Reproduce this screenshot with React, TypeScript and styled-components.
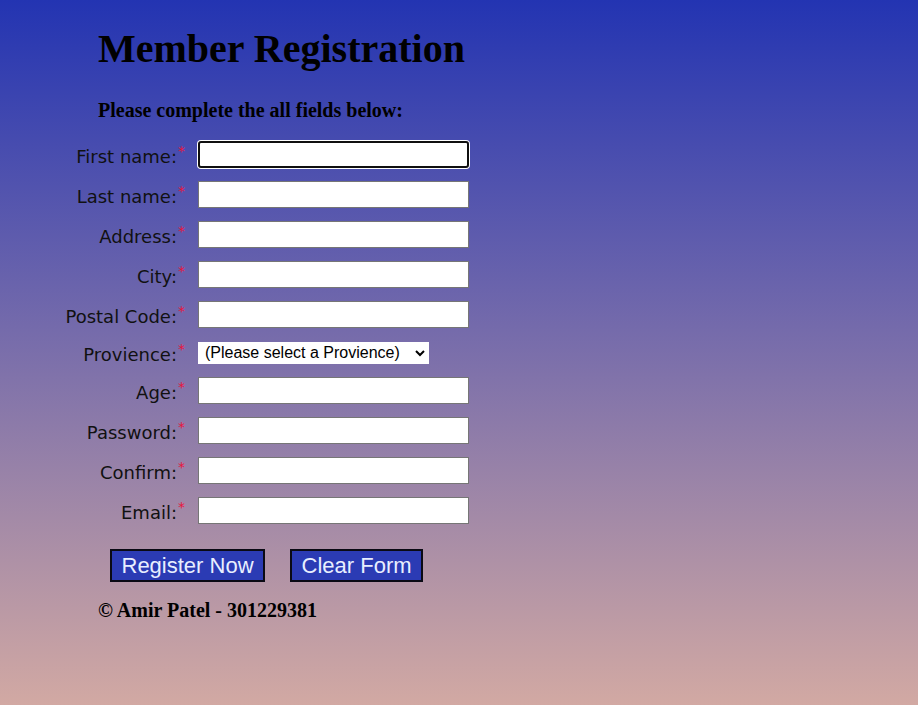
import React from "react";
import styled, { createGlobalStyle } from "styled-components";

const GlobalStyle = createGlobalStyle`
  html, body { margin: 0; padding: 0; height: 100%; }
  body {
    min-height: 100vh;
    background: linear-gradient(to bottom, #2334b2 0%, #d2a9a3 100%);
    background-attachment: fixed;
  }
`;

const Page = styled.div`
  min-height: 100vh;
  box-sizing: border-box;
  padding-top: 27px;
`;

const Header = styled.header`
  padding-left: 98px;
`;

const Title = styled.h1`
  margin: 0;
  font-family: "Liberation Serif", "Times New Roman", serif;
  font-weight: bold;
  font-size: 40px;
  line-height: 44px;
  color: #000;
`;

const Subtitle = styled.h4`
  margin: 28px 0 0;
  font-family: "Liberation Serif", "Times New Roman", serif;
  font-weight: bold;
  font-size: 20px;
  line-height: 22px;
  color: #000;
`;

const Form = styled.form`
  display: grid;
  grid-template-columns: 185px 271px;
  column-gap: 13px;
  margin-top: 13.5px;
`;

const Label = styled.label`
  display: flex;
  justify-content: flex-end;
  align-items: center;
`;

const LabelText = styled.span`
  font-family: "DejaVu Sans", Verdana, sans-serif;
  font-size: 18px;
  color: #111;
  white-space: nowrap;
`;

const Star = styled.sup`
  color: #e8163e;
  font-size: 14px;
  margin-left: 1px;
`;

const Cell = styled.div<{ $select?: boolean }>`
  display: flex;
  align-items: center;
  padding: ${(p) => (p.$select ? "7px 0" : "6.5px 0")};
`;

const TextInput = styled.input<{ $focused?: boolean }>`
  box-sizing: border-box;
  width: 271px;
  height: 27px;
  margin: 0;
  padding: 1px 4px;
  background: #fff;
  border: 1px solid #767676;
  border-radius: 0;
  font-family: "Liberation Sans", Arial, sans-serif;
  font-size: 14px;
  outline: none;
  ${(p) =>
    p.$focused
      ? `border: 2px solid #101010; border-radius: 3px; box-shadow: 0 0 0 1px #fff;`
      : ""}
  &:focus {
    border: 2px solid #101010;
    border-radius: 3px;
    box-shadow: 0 0 0 1px #fff;
    outline: none;
  }
`;

const Select = styled.select`
  box-sizing: border-box;
  height: 22px;
  width: 231px;
  margin: 0;
  padding: 0 0 0 2px;
  border: 1px solid #fff;
  border-radius: 0;
  background: #fff;
  font-family: "Liberation Sans", Arial, sans-serif;
  font-size: 16px;
  color: #000;
`;

const Buttons = styled.div`
  display: flex;
  gap: 25px;
  padding-left: 110px;
  margin-top: 18.5px;
`;

const Button = styled.button`
  box-sizing: border-box;
  height: 33px;
  margin: 0;
  padding: 0 9.5px;
  background: #2b3bb4;
  color: #e8eeff;
  border: 2px solid #0a0a14;
  border-radius: 0;
  font-family: "Liberation Sans", Arial, sans-serif;
  font-size: 22px;
  line-height: 27px;
  cursor: pointer;
`;

const Footer = styled.p`
  margin: 17px 0 0;
  padding-left: 98px;
  font-family: "Liberation Serif", "Times New Roman", serif;
  font-weight: bold;
  font-size: 20px;
  line-height: 22px;
  color: #000;
`;

type Field = { label: string; name: string; type?: string; select?: boolean };

const fields: Field[] = [
  { label: "First name:", name: "first" },
  { label: "Last name:", name: "last" },
  { label: "Address:", name: "address" },
  { label: "City:", name: "city" },
  { label: "Postal Code:", name: "postal" },
  { label: "Provience:", name: "province", select: true },
  { label: "Age:", name: "age" },
  { label: "Password:", name: "password", type: "password" },
  { label: "Confirm:", name: "confirm", type: "password" },
  { label: "Email:", name: "email" },
];

export default function App() {
  return (
    <>
      <GlobalStyle />
      <Page>
        <Header>
          <Title>Member Registration</Title>
          <Subtitle>Please complete the all fields below:</Subtitle>
        </Header>
        <Form onSubmit={(e) => e.preventDefault()}>
          {fields.map((f, i) => (
            <React.Fragment key={f.name}>
              <Label htmlFor={f.name}>
                <LabelText>
                  {f.label}
                  <Star>*</Star>
                </LabelText>
              </Label>
              <Cell $select={f.select}>
                {f.select ? (
                  <Select id={f.name} name={f.name} defaultValue="">
                    <option value="">(Please select a Provience)</option>
                    <option value="ON">Ontario</option>
                    <option value="QC">Quebec</option>
                  </Select>
                ) : (
                  <TextInput
                    id={f.name}
                    name={f.name}
                    type={f.type ?? "text"}
                    $focused={i === 0}
                    autoFocus={i === 0}
                  />
                )}
              </Cell>
            </React.Fragment>
          ))}
        </Form>
        <Buttons>
          <Button type="submit">Register Now</Button>
          <Button type="reset">Clear Form</Button>
        </Buttons>
        <Footer>© Amir Patel - 301229381</Footer>
      </Page>
    </>
  );
}
